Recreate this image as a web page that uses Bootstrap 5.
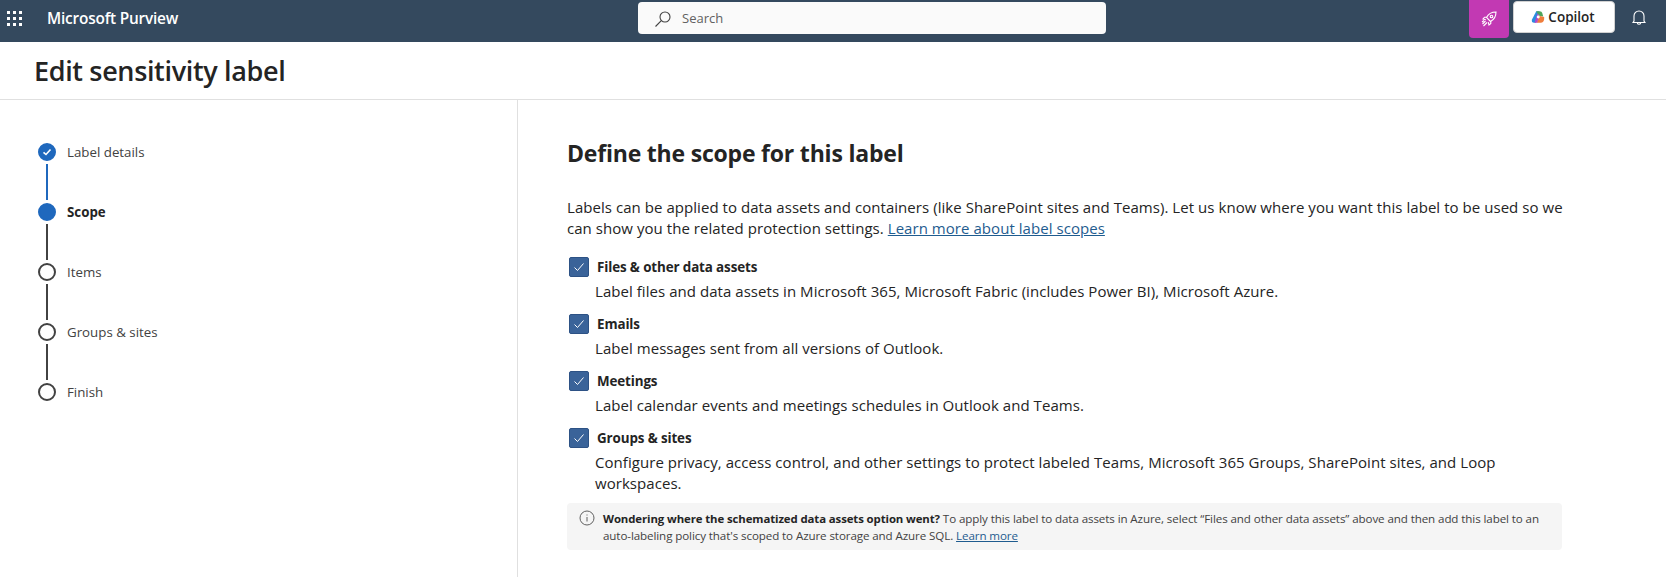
<!DOCTYPE html>
<html lang="en">
<head>
<meta charset="utf-8">
<title>Edit sensitivity label</title>
<link href="https://cdn.jsdelivr.net/npm/bootstrap@5.3.0/dist/css/bootstrap.min.css" rel="stylesheet">
<style>
html,body{height:577px;overflow:hidden;background:#fff}
body{font-family:"Open Sans","Noto Sans",sans-serif;color:#242424}
.topbar{height:42px;background:#34495e;color:#fff}
.leftgroup{height:37px}
.waffle{display:grid;grid-template-columns:repeat(3,3px);gap:3px;margin:0 0 0 7px}
.waffle i{width:3px;height:3px;background:#fff;display:block}
.brand{margin-left:25px;font-size:15.4px;font-weight:600;letter-spacing:-.2px}
.searchslot{width:468px;height:32px;background:#fafafa;border-radius:4px;color:#616161;font-size:13px;padding:1px 0 0 16px;gap:10px}
.topcenter{left:638px;top:2px;position:absolute}
.rocketbtn{width:40px;height:38px;background:#c239b3;border-radius:0 0 4px 4px;margin-right:4px}
.copilotbtn{width:102px;height:32px;margin-top:1px;background:#fff;border:1px solid #d1d1d1;border-radius:4px;color:#242424;font-size:13.5px;font-weight:600;gap:3px;padding-right:2px}
.bellbtn{width:48px;height:36px;margin-right:3px}
.titlebar{height:58px;border-bottom:1px solid #e0e0e0;padding-left:34px}
.titlebar h1{font-size:27px;font-weight:600;margin:0;letter-spacing:-.35px;line-height:34px;color:#242424}
.bodywrap{height:477px}
.stepspane{width:518px;border-right:1px solid #e0e0e0;padding:42px 0 0 38px}
.stepitem{height:60px;position:relative;gap:10px;font-size:13.3px;color:#424242;align-items:flex-start}
.stepitem strong{font-weight:700;color:#242424}
.stepdot{width:18px;height:18px;flex:none;border-radius:50%;border:2px solid #424242;background:#fff;position:relative;top:1px;margin-right:1px}
.stepdot.filled{background:#1f68bd;border-color:#1f68bd}
.stepline{position:absolute;left:8px;top:22px;width:2px;height:36px;background:#424242}
.stepline.doneline{background:#1f68bd}
.steptext{line-height:20px}
.mainpane{padding:0 0 0 49px;width:1045px}
.mainpane h2{font-size:23px;font-weight:700;margin:37px 0 0;line-height:32px;letter-spacing:-.2px;color:#242424}
.intro{font-size:15px;line-height:21px;margin:28px 0 0;letter-spacing:.05px;width:1000px}
.intro a,.notebox a{color:#1f5c8f}
.optrow{margin-top:12px}
.intro + .optrow{margin-top:18px}
.optbox{width:20px;height:20px;background:#3a6399;border:1px solid #2d5285;border-radius:2px;margin-left:2px}
.optname{font-size:13.4px;font-weight:700;margin-left:8px;line-height:20px;letter-spacing:-.12px}
.optdesc{font-size:15px;line-height:21px;margin:4px 0 0 28px;letter-spacing:.05px;width:975px}
.notebox{width:995px;height:47px;background:#f5f5f5;border-radius:4px;margin-top:9px;padding:7px 12px;gap:8px;font-size:11.6px;line-height:17px;letter-spacing:-.1px;color:#424242}
.notebox b{color:#242424;font-size:11.4px}
.noteicon{flex:none}
</style>
</head>
<body>
<header class="topbar d-flex align-items-start position-relative">
  <div class="leftgroup d-flex align-items-center">
    <div class="waffle"><i></i><i></i><i></i><i></i><i></i><i></i><i></i><i></i><i></i></div>
    <div class="brand">Microsoft Purview</div>
  </div>
  <div class="topcenter">
    <div class="searchslot d-flex align-items-center">
      <svg width="18" height="18" viewBox="0 0 18 18" fill="none" stroke="#424242" stroke-width="1.1"><circle cx="11" cy="7" r="5"/><path d="M7.3 10.6 1.5 16.5"/></svg>
      <span>Search</span>
    </div>
  </div>
  <div class="ms-auto d-flex align-items-start">
    <div class="rocketbtn d-flex align-items-center justify-content-center">
      <svg width="16" height="16" viewBox="0 0 16 16" fill="none" stroke="#fff" stroke-width="1.1"><path d="M5.500 6.500C7.500 2.500 10.500 1 15 1c0 4.500-1.500 7.500-5.500 9.500l-4-4Z"/><circle cx="10.500" cy="5.500" r="1.300"/><path d="M5.800 6.200H3.500L2 8l2.800.8M9.800 10.200v2.300L8 14l-.8-2.800M4.500 10 1.500 13M6 11.500 2.500 15M3 9.500 1 11"/></svg>
    </div>
    <div class="copilotbtn d-flex align-items-center justify-content-center">
      <svg width="14" height="14" viewBox="0 0 16 16" fill="none"><path d="M6 1.500h3.500L7.500 8l-2 6.500H3.500C1.500 14.500.5 13 1 11z" fill="#2a8ce0"/><path d="M6 1.500h4c1.500 0 2.500 1 3 2.500l1 3.500-5-1z" fill="#4fa55a"/><path d="M9 6.500l6 1.500c.5 3.500-1 6.500-3.500 6.500H6.500z" fill="#ef7d3c"/><path d="M7.500 4 9.500 6.500 7 14.500H4z" fill="#b349c6"/><circle cx="8.300" cy="8" r="1.700" fill="#fff"/></svg>
      <span>Copilot</span>
    </div>
    <div class="bellbtn d-flex align-items-center justify-content-center">
      <svg width="14" height="16" viewBox="0 0 14 16" fill="none" stroke="#fff" stroke-width="1.100"><path d="M2 11V6a5 5 0 0 1 10 0v5l1 1.500H1L2 11Z"/><path d="M5.300 13a1.800 1.800 0 0 0 3.400 0"/></svg>
    </div>
  </div>
</header>
<div class="titlebar d-flex align-items-center"><h1>Edit sensitivity label</h1></div>
<div class="bodywrap d-flex">
  <nav class="stepspane">
    <div class="stepitem d-flex">
      <span class="stepdot filled d-flex align-items-center justify-content-center"><svg width="10" height="10" viewBox="0 0 10 10" fill="none" stroke="#fff" stroke-width="1.600"><path d="M1.500 5.300 4 7.500 8.500 2.500"/></svg></span>
      <span class="steptext">Label details</span><span class="stepline doneline"></span>
    </div>
    <div class="stepitem d-flex"><span class="stepdot filled"></span><strong class="steptext">Scope</strong><span class="stepline"></span></div>
    <div class="stepitem d-flex"><span class="stepdot"></span><span class="steptext">Items</span><span class="stepline"></span></div>
    <div class="stepitem d-flex"><span class="stepdot"></span><span class="steptext">Groups &amp; sites</span><span class="stepline"></span></div>
    <div class="stepitem d-flex"><span class="stepdot"></span><span class="steptext">Finish</span></div>
  </nav>
  <main class="mainpane">
    <h2>Define the scope for this label</h2>
    <p class="intro">Labels can be applied to data assets and containers (like SharePoint sites and Teams). Let us know where you want this label to be used so we can show you the related protection settings. <a href="#">Learn more about label scopes</a></p>
    <div class="optrow">
      <div class="d-flex align-items-center"><span class="optbox d-flex align-items-center justify-content-center"><svg width="14" height="14" viewBox="0 0 14 14" fill="none" stroke="#fff"><path d="M2.500 7.500 5.500 10.500 11.500 3.500"/></svg></span><span class="optname">Files &amp; other data assets</span></div>
      <div class="optdesc">Label files and data assets in Microsoft 365, Microsoft Fabric (includes Power BI), Microsoft Azure.</div>
    </div>
    <div class="optrow">
      <div class="d-flex align-items-center"><span class="optbox d-flex align-items-center justify-content-center"><svg width="14" height="14" viewBox="0 0 14 14" fill="none" stroke="#fff"><path d="M2.500 7.500 5.500 10.500 11.500 3.500"/></svg></span><span class="optname">Emails</span></div>
      <div class="optdesc">Label messages sent from all versions of Outlook.</div>
    </div>
    <div class="optrow">
      <div class="d-flex align-items-center"><span class="optbox d-flex align-items-center justify-content-center"><svg width="14" height="14" viewBox="0 0 14 14" fill="none" stroke="#fff"><path d="M2.500 7.500 5.500 10.500 11.500 3.500"/></svg></span><span class="optname">Meetings</span></div>
      <div class="optdesc">Label calendar events and meetings schedules in Outlook and Teams.</div>
    </div>
    <div class="optrow">
      <div class="d-flex align-items-center"><span class="optbox d-flex align-items-center justify-content-center"><svg width="14" height="14" viewBox="0 0 14 14" fill="none" stroke="#fff"><path d="M2.500 7.500 5.500 10.500 11.500 3.500"/></svg></span><span class="optname">Groups &amp; sites</span></div>
      <div class="optdesc">Configure privacy, access control, and other settings to protect labeled Teams, Microsoft 365 Groups, SharePoint sites, and Loop workspaces.</div>
    </div>
    <div class="notebox d-flex">
      <svg class="noteicon" width="16" height="16" viewBox="0 0 16 16" fill="none" stroke="#616161"><circle cx="8" cy="8" r="7"/><path d="M8 7v4.500M8 4.500v1"/></svg>
      <div><b>Wondering where the schematized data assets option went?</b> To apply this label to data assets in Azure, select “Files and other data assets” above and then add this label to an auto-labeling policy that's scoped to Azure storage and Azure SQL. <a href="#">Learn more</a></div>
    </div>
  </main>
</div>
<script src="https://cdn.jsdelivr.net/npm/bootstrap@5.3.0/dist/js/bootstrap.bundle.min.js"></script>
</body>
</html>
